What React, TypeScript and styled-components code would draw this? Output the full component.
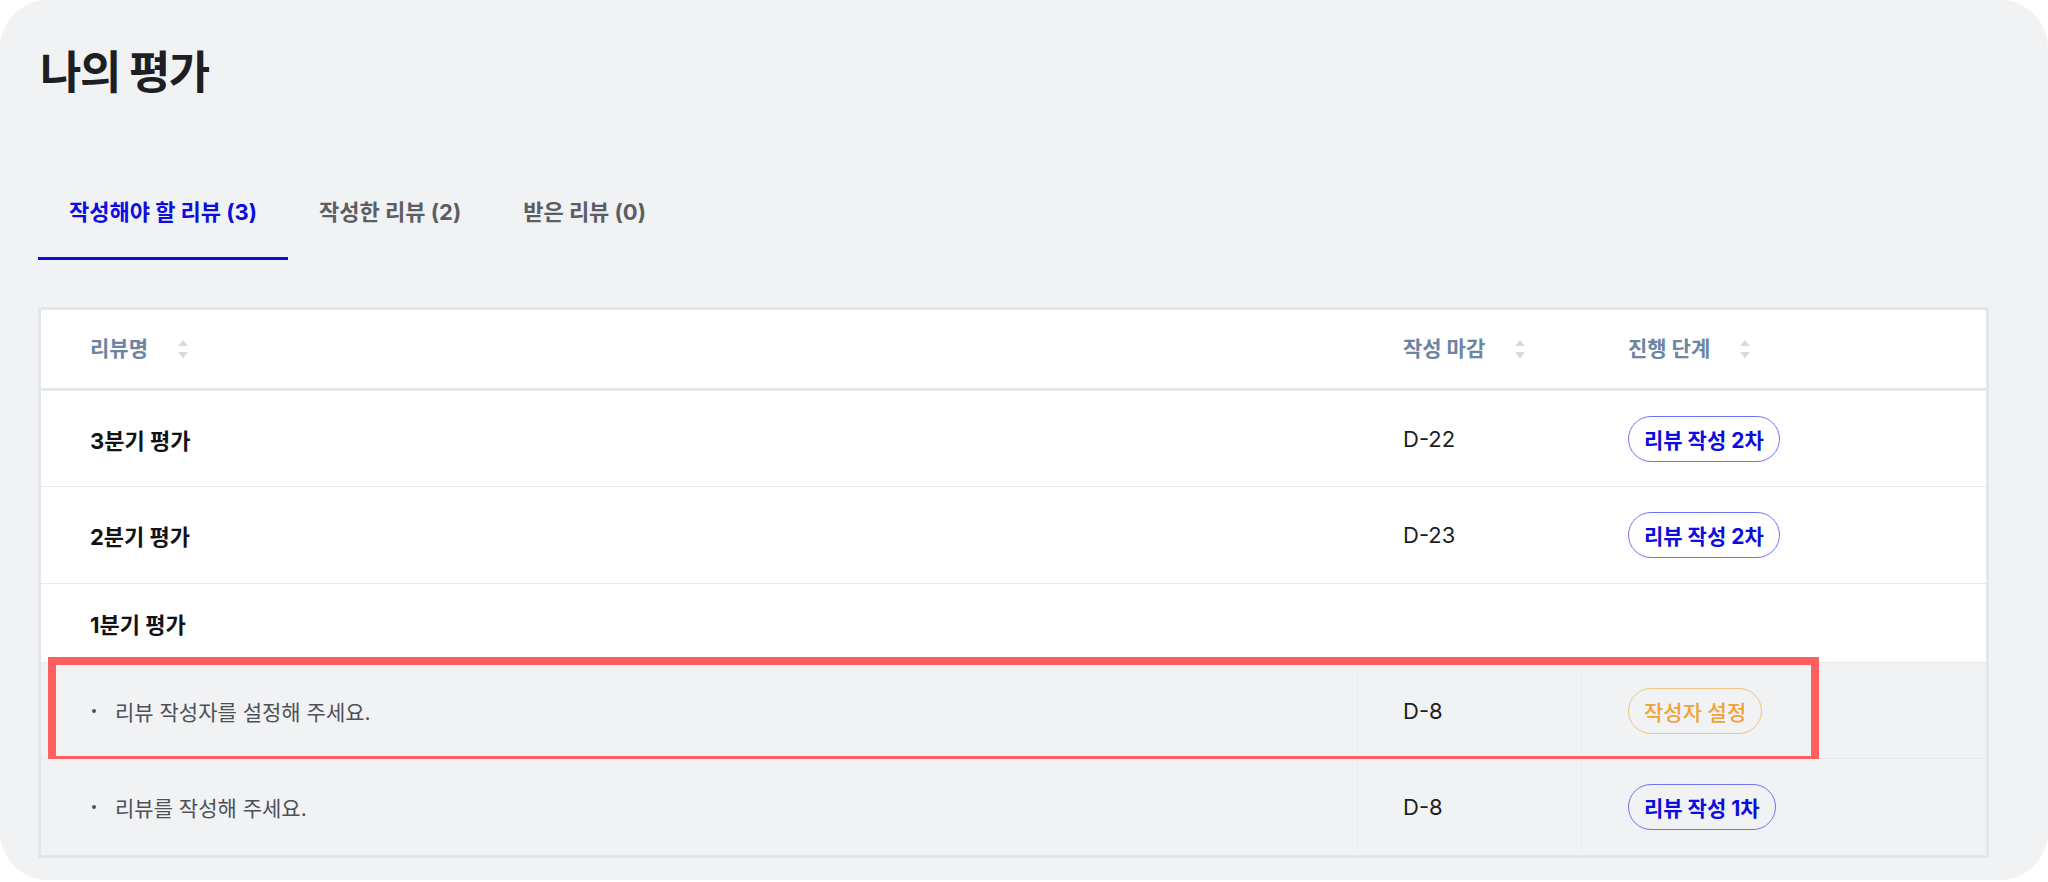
import styled, { createGlobalStyle } from 'styled-components';

const GlobalStyle = createGlobalStyle`
  html, body {
    margin: 0;
    padding: 0;
    background: #ffffff;
  }
  * {
    box-sizing: border-box;
  }
`;

const FONT = `Inter, 'Noto Sans CJK KR', 'Noto Sans', sans-serif`;

const Panel = styled.main`
  width: 2048px;
  height: 880px;
  background: #f1f2f4;
  border-radius: 48px;
  padding: 43px 59px 0 38px;
  font-family: ${FONT};
  overflow: hidden;
`;

const Title = styled.h1`
  margin: 0 0 0 2px;
  font-size: 45px;
  line-height: 60px;
  font-weight: 700;
  color: #1d1f22;
  letter-spacing: -1.5px;
`;

const TabBar = styled.nav`
  display: flex;
  margin-top: 95px;
`;

const Tab = styled.button<{ $active?: boolean }>`
  font-family: ${FONT};
  background: none;
  border: none;
  padding: 0 31px 31px;
  margin: 0;
  font-size: 22px;
  line-height: 28px;
  font-weight: 700;
  cursor: pointer;
  color: ${(p) => (p.$active ? '#0d0de0' : '#5b5e63')};
  border-bottom: 3px solid ${(p) => (p.$active ? '#0d0de0' : 'transparent')};
`;

const Table = styled.section`
  margin-top: 47px;
  width: 1951px;
  border: 3px solid #e3e6ea;
  background: #ffffff;
`;

const Row = styled.div<{ $height: number; $sub?: boolean; $last?: boolean }>`
  position: relative;
  display: grid;
  grid-template-columns: 1316px 224px 1fr;
  height: ${(p) => p.$height}px;
  background: ${(p) => (p.$sub ? '#f1f2f4' : '#ffffff')};
  border-bottom: ${(p) => (p.$last ? 'none' : '1px solid #e8e9ec')};
`;

const HeadRow = styled(Row)`
  border-bottom: 3px solid #e3e6ea;
`;

const Cell = styled.div<{ $sub?: boolean; $pad?: number }>`
  display: flex;
  align-items: center;
  padding-left: ${(p) => p.$pad ?? 48}px;
  border-left: ${(p) => (p.$sub ? '1px solid #ebecef' : 'none')};
  &:first-child {
    border-left: none;
  }
`;

const HeadLabel = styled.span`
  font-size: 21px;
  font-weight: 700;
  color: #6b85a4;
  line-height: 28px;
`;

const SortIcon = styled.svg`
  margin-left: 30px;
  flex-shrink: 0;
`;

const ReviewName = styled.span`
  font-size: 22px;
  font-weight: 700;
  color: #111214;
`;

const SubText = styled.span`
  font-size: 21px;
  color: #4d5157;
  display: flex;
  align-items: center;
  &::before {
    content: '';
    width: 4px;
    height: 4px;
    border-radius: 50%;
    background: #4d5157;
    margin: 0 19px 0 2px;
  }
`;

const Due = styled.span`
  font-size: 22px;
  color: #1e1f21;
`;

const Badge = styled.span<{ $tone: 'blue' | 'orange' }>`
  display: inline-flex;
  align-items: center;
  height: 46px;
  padding: 0 15px;
  border-radius: 999px;
  font-size: 21px;
  font-weight: ${(p) => (p.$tone === 'blue' ? 700 : 500)};
  color: ${(p) => (p.$tone === 'blue' ? '#0c0ce0' : '#eea237')};
  border: 1.5px solid ${(p) => (p.$tone === 'blue' ? '#7272f0' : '#f0c480')};
`;

const Highlight = styled.div`
  position: absolute;
  left: 7px;
  top: -6px;
  width: 1771px;
  height: 107px;
  border: 8px solid #ff5f5f;
  pointer-events: none;
`;

function Sort() {
  return (
    <SortIcon width="10" height="19" viewBox="0 0 10 19">
      <path d="M5 0 L10 6 L0 6 Z" fill="#d7dade" />
      <path d="M0 12 L10 12 L5 18.5 Z" fill="#d7dade" />
    </SortIcon>
  );
}

export default function App() {
  return (
    <>
      <GlobalStyle />
      <Panel>
        <Title>나의 평가</Title>
        <TabBar>
          <Tab $active>작성해야 할 리뷰 (3)</Tab>
          <Tab>작성한 리뷰 (2)</Tab>
          <Tab>받은 리뷰 (0)</Tab>
        </TabBar>
        <Table>
          <HeadRow $height={81}>
            <Cell $pad={49}>
              <HeadLabel>리뷰명</HeadLabel>
              <Sort />
            </Cell>
            <Cell $pad={46}>
              <HeadLabel>작성 마감</HeadLabel>
              <Sort />
            </Cell>
            <Cell $pad={47}>
              <HeadLabel>진행 단계</HeadLabel>
              <Sort />
            </Cell>
          </HeadRow>
          <Row $height={96}>
            <Cell $pad={49}><ReviewName>3분기 평가</ReviewName></Cell>
            <Cell $pad={46}><Due>D-22</Due></Cell>
            <Cell $pad={47}><Badge $tone="blue">리뷰 작성 2차</Badge></Cell>
          </Row>
          <Row $height={97}>
            <Cell $pad={49}><ReviewName>2분기 평가</ReviewName></Cell>
            <Cell $pad={46}><Due>D-23</Due></Cell>
            <Cell $pad={47}><Badge $tone="blue">리뷰 작성 2차</Badge></Cell>
          </Row>
          <Row $height={79}>
            <Cell $pad={49}><ReviewName>1분기 평가</ReviewName></Cell>
            <Cell />
            <Cell />
          </Row>
          <Row $height={96} $sub>
            <Cell $sub $pad={49}><SubText>리뷰 작성자를 설정해 주세요.</SubText></Cell>
            <Cell $sub $pad={45}><Due>D-8</Due></Cell>
            <Cell $sub $pad={46}><Badge $tone="orange">작성자 설정</Badge></Cell>
            <Highlight />
          </Row>
          <Row $height={96} $sub $last>
            <Cell $sub $pad={49}><SubText>리뷰를 작성해 주세요.</SubText></Cell>
            <Cell $sub $pad={45}><Due>D-8</Due></Cell>
            <Cell $sub $pad={46}><Badge $tone="blue">리뷰 작성 1차</Badge></Cell>
          </Row>
        </Table>
      </Panel>
    </>
  );
}
